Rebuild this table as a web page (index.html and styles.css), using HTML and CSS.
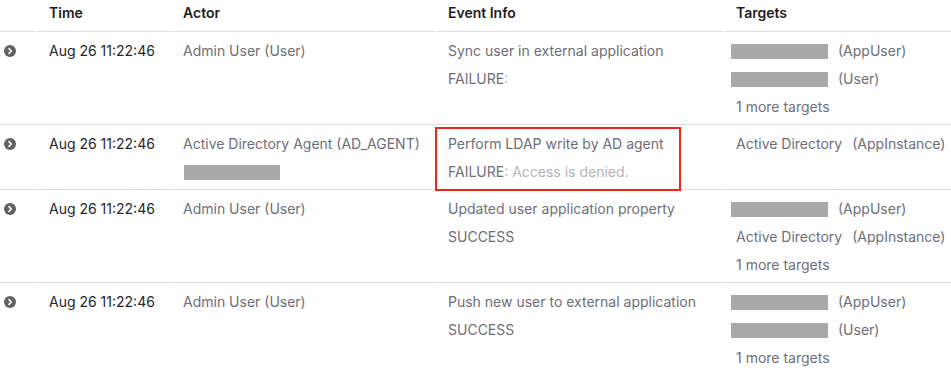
FILE: index.html
```html
<!DOCTYPE html>
<html>
<head>
<meta charset="utf-8">
<link rel="stylesheet" href="styles.css">
</head>
<body>
<div class="table">
  <div class="row head">
    <div class="cell"></div>
    <div class="cell">Time</div>
    <div class="cell">Actor</div>
    <div class="cell">Event Info</div>
    <div class="cell">Targets</div>
  </div>

  <div class="row">
    <div class="cell icon-cell"><span class="expander"><svg viewBox="0 0 12 12" width="12" height="12"><circle cx="6" cy="6" r="6" fill="#616161"/><path d="M5 3.6 L7.3 6 L5 8.4" fill="none" stroke="#fff" stroke-width="1.6" stroke-linecap="round" stroke-linejoin="round"/></svg></span></div>
    <div class="cell time">Aug 26 11:22:46</div>
    <div class="cell muted">Admin User (User)</div>
    <div class="cell muted">
      <div>Sync user in external application</div>
      <div>FAILURE<span class="light">:</span></div>
    </div>
    <div class="cell muted">
      <div class="target"><span class="redact"></span><span>(AppUser)</span></div>
      <div class="target"><span class="redact"></span><span>(User)</span></div>
      <div>1 more targets</div>
    </div>
  </div>

  <div class="row">
    <div class="cell icon-cell"><span class="expander"><svg viewBox="0 0 12 12" width="12" height="12"><circle cx="6" cy="6" r="6" fill="#616161"/><path d="M5 3.6 L7.3 6 L5 8.4" fill="none" stroke="#fff" stroke-width="1.6" stroke-linecap="round" stroke-linejoin="round"/></svg></span></div>
    <div class="cell time">Aug 26 11:22:46</div>
    <div class="cell muted">
      <div>Active Directory Agent (AD_AGENT)</div>
      <div class="target"><span class="redact actor-redact"></span></div>
    </div>
    <div class="cell muted highlight-cell">
      <div>Perform LDAP write by AD agent</div>
      <div>FAILURE<span class="light">: Access is denied.</span></div>
      <div class="highlight"></div>
    </div>
    <div class="cell muted">
      <div class="target"><span>Active Directory</span><span>(AppInstance)</span></div>
    </div>
  </div>

  <div class="row">
    <div class="cell icon-cell"><span class="expander"><svg viewBox="0 0 12 12" width="12" height="12"><circle cx="6" cy="6" r="6" fill="#616161"/><path d="M5 3.6 L7.3 6 L5 8.4" fill="none" stroke="#fff" stroke-width="1.6" stroke-linecap="round" stroke-linejoin="round"/></svg></span></div>
    <div class="cell time">Aug 26 11:22:46</div>
    <div class="cell muted">Admin User (User)</div>
    <div class="cell muted">
      <div>Updated user application property</div>
      <div>SUCCESS</div>
    </div>
    <div class="cell muted">
      <div class="target"><span class="redact"></span><span>(AppUser)</span></div>
      <div class="target"><span>Active Directory</span><span>(AppInstance)</span></div>
      <div>1 more targets</div>
    </div>
  </div>

  <div class="row">
    <div class="cell icon-cell"><span class="expander"><svg viewBox="0 0 12 12" width="12" height="12"><circle cx="6" cy="6" r="6" fill="#616161"/><path d="M5 3.6 L7.3 6 L5 8.4" fill="none" stroke="#fff" stroke-width="1.6" stroke-linecap="round" stroke-linejoin="round"/></svg></span></div>
    <div class="cell time">Aug 26 11:22:46</div>
    <div class="cell muted">Admin User (User)</div>
    <div class="cell muted">
      <div>Push new user to external application</div>
      <div>SUCCESS</div>
    </div>
    <div class="cell muted">
      <div class="target"><span class="redact"></span><span>(AppUser)</span></div>
      <div class="target"><span class="redact"></span><span>(User)</span></div>
      <div>1 more targets</div>
    </div>
  </div>
</div>
</body>
</html>
```

FILE: styles.css
```css
html, body {
  margin: 0;
  padding: 0;
  background: #ffffff;
}

body {
  font-family: Inter, "Noto Sans", sans-serif;
  font-size: 14px;
  color: #1d1d21;
}

.table {
  width: 951px;
}

.row {
  display: grid;
  grid-template-columns: 36px 133px 264px 287px 1fr;
  column-gap: 1px;
}

.cell {
  border-bottom: 1px solid #dedede;
  padding: 5px 0 3px 12px;
  line-height: 28px;
  white-space: nowrap;
}

.head .cell {
  font-weight: 600;
  color: #1d1d21;
  line-height: 26px;
  padding-top: 0;
  padding-bottom: 5px;
}

.icon-cell {
  padding-left: 4px;
}

.expander {
  display: inline-flex;
  height: 28px;
  align-items: center;
}

.expander svg {
  display: block;
  width: 12px;
  height: 12px;
}

.time {
  color: #26262b;
}

.muted {
  color: #6e6e78;
}

.light {
  color: #b4b4bb;
}

.target {
  display: flex;
  align-items: center;
  gap: 10px;
  height: 28px;
}

.redact {
  display: inline-block;
  width: 97px;
  height: 15px;
  background: #a9a9a9;
  margin-left: -5px;
}

.actor-redact {
  margin-left: 1px;
  width: 96px;
}

.highlight-cell {
  position: relative;
}

.highlight {
  position: absolute;
  left: -1px;
  top: 2px;
  width: 246px;
  height: 64px;
  box-sizing: border-box;
  border: 2px solid #e8291c;
}
```
